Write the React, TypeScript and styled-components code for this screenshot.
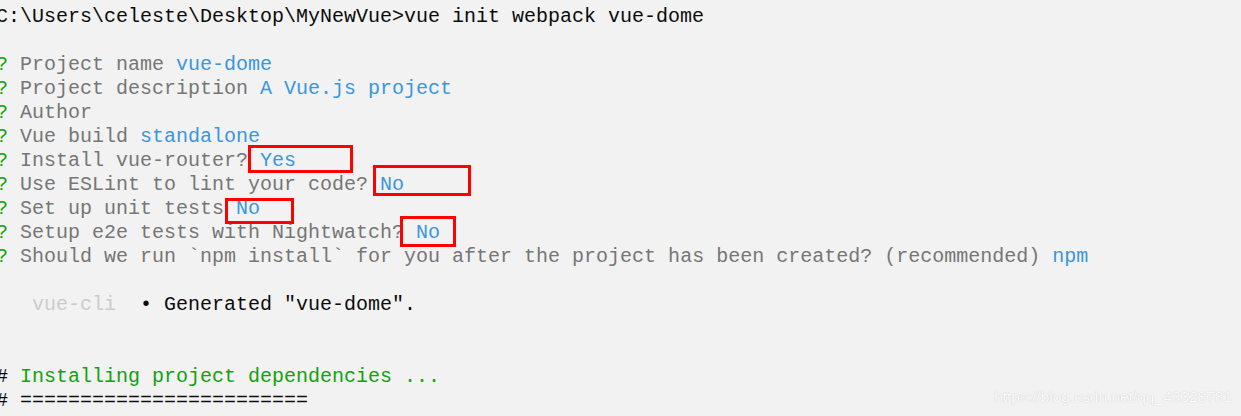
import React from "react";
import styled, { createGlobalStyle } from "styled-components";

const Global = createGlobalStyle`
  html, body { margin: 0; padding: 0; background: #f2f2f2; }
  body { overflow: hidden; }
`;

const Screen = styled.div`
  position: relative;
  width: 1241px;
  height: 416px;
  overflow: hidden;
  background: #f2f2f2;
`;

const Terminal = styled.div`
  display: flex;
  flex-direction: column;
  padding-top: 5px;
  margin-left: -4px;
  font-family: "Liberation Mono", "DejaVu Sans Mono", monospace;
  font-size: 20px;
  color: #767676;
`;

const Line = styled.div`
  height: 24px;
  line-height: 24px;
  white-space: pre;
`;

type Tone = "green" | "blue" | "black" | "light" | "grey";
const tones: Record<Tone, string> = {
  green: "#13a10e",
  blue: "#3a96dd",
  black: "#0c0c0c",
  light: "#cccccc",
  grey: "#767676",
};

const Span = styled.span<{ $tone: Tone }>`
  color: ${(p) => tones[p.$tone]};
`;

const Mark = styled.div<{ $x: number; $y: number; $w: number; $h: number }>`
  position: absolute;
  left: ${(p) => p.$x}px;
  top: ${(p) => p.$y}px;
  width: ${(p) => p.$w}px;
  height: ${(p) => p.$h}px;
  box-sizing: border-box;
  border: 3px solid #ff0000;
`;

const Watermark = styled.div`
  position: absolute;
  right: 9px;
  bottom: 10px;
  font-family: "Liberation Sans", Arial, sans-serif;
  font-size: 15.5px;
  color: rgba(255, 255, 255, 0.95);
  text-shadow: 0 0 1px rgba(150, 150, 150, 0.6);
`;

const Q = () => <Span $tone="green">?</Span>;

export default function App() {
  return (
    <Screen>
      <Global />
      <Terminal>
        <Line>
          <Span $tone="black">C:\Users\celeste\Desktop\MyNewVue&gt;vue init webpack vue-dome</Span>
        </Line>
        <Line> </Line>
        <Line>
          <Q /> Project name <Span $tone="blue">vue-dome</Span>
        </Line>
        <Line>
          <Q /> Project description <Span $tone="blue">A Vue.js project</Span>
        </Line>
        <Line>
          <Q /> Author
        </Line>
        <Line>
          <Q /> Vue build <Span $tone="blue">standalone</Span>
        </Line>
        <Line>
          <Q /> Install vue-router? <Span $tone="blue">Yes</Span>
        </Line>
        <Line>
          <Q /> Use ESLint to lint your code? <Span $tone="blue">No</Span>
        </Line>
        <Line>
          <Q /> Set up unit tests <Span $tone="blue">No</Span>
        </Line>
        <Line>
          <Q /> Setup e2e tests with Nightwatch? <Span $tone="blue">No</Span>
        </Line>
        <Line>
          <Q /> Should we run `npm install` for you after the project has been created? (recommended){" "}
          <Span $tone="blue">npm</Span>
        </Line>
        <Line> </Line>
        <Line>
          {"   "}
          <Span $tone="light">vue-cli</Span>
          <Span $tone="black">{"  • Generated \"vue-dome\"."}</Span>
        </Line>
        <Line> </Line>
        <Line> </Line>
        <Line>
          <Span $tone="black">#</Span> <Span $tone="green">Installing project dependencies ...</Span>
        </Line>
        <Line>
          <Span $tone="black"># ========================</Span>
        </Line>
      </Terminal>
      <Mark $x={248} $y={145} $w={105} $h={28} />
      <Mark $x={373} $y={165} $w={98} $h={31} />
      <Mark $x={225} $y={198} $w={69} $h={26} />
      <Mark $x={400} $y={216} $w={56} $h={31} />
      <Watermark>https://blog.csdn.net/qq_43328781</Watermark>
    </Screen>
  );
}
